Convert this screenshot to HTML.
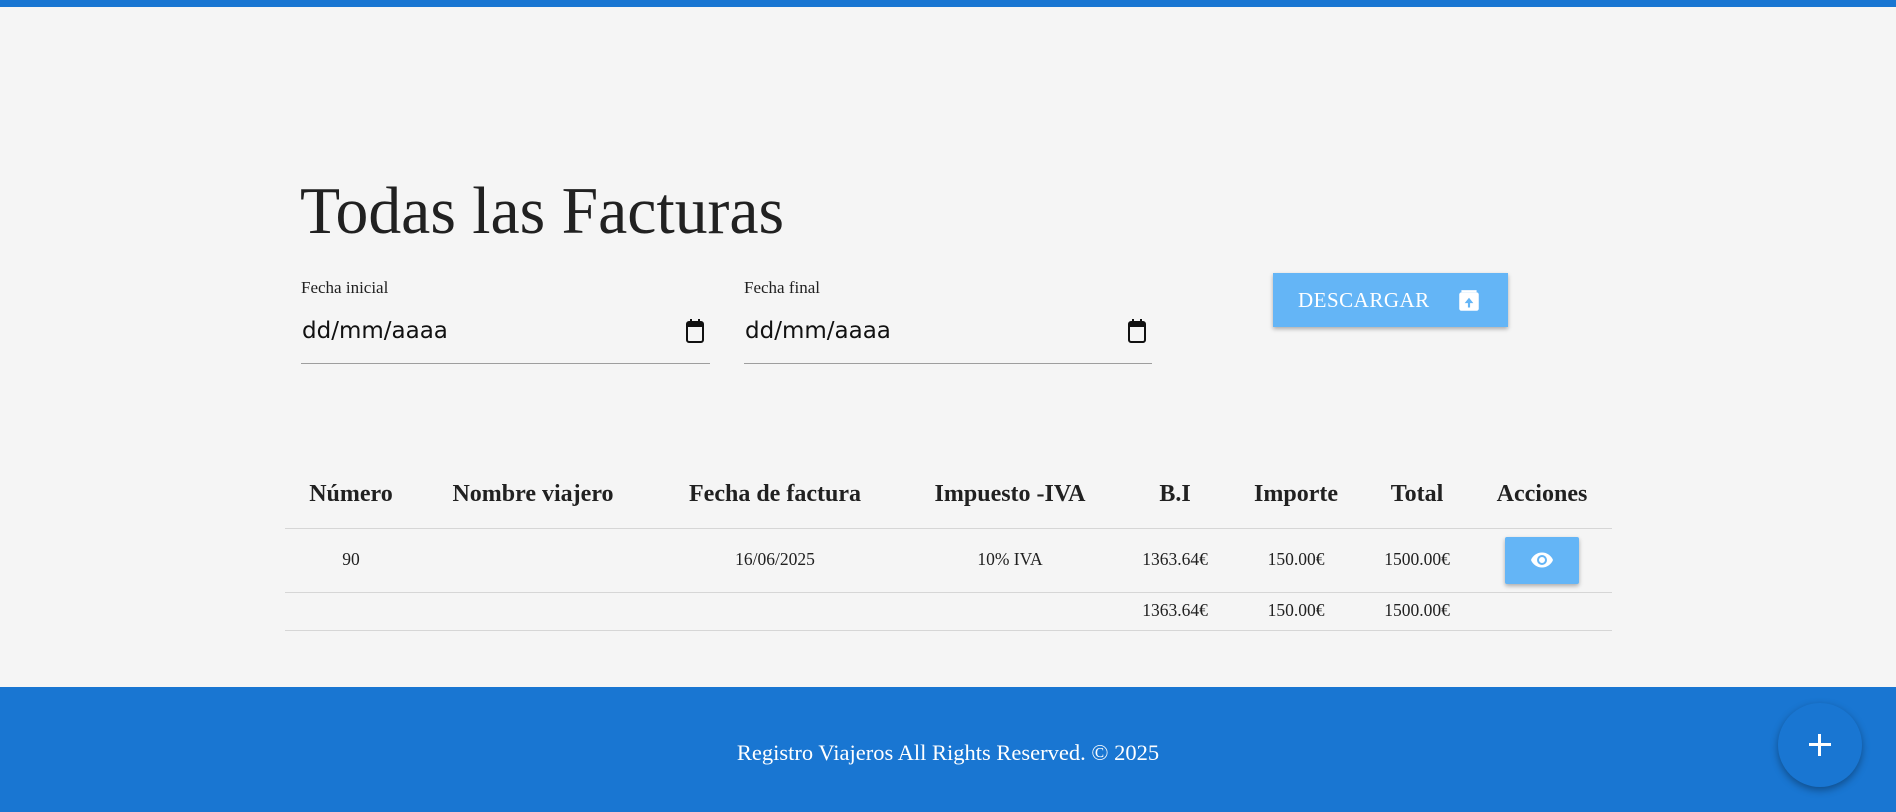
<!DOCTYPE html>
<html><head><meta charset="utf-8"><style>
*{margin:0;padding:0;box-sizing:border-box}
body{width:1896px;height:812px;background:#f5f5f5;font-family:"Liberation Serif",serif;position:relative;overflow:hidden;color:#212121}
.top{position:absolute;top:0;left:0;width:100%;height:7px;background:#1976d2}
h1{position:absolute;left:300px;top:178px;font-size:67px;font-weight:400;line-height:1;transform:scaleX(0.98);transform-origin:left}
.lbl{position:absolute;top:278px;font-size:17px}
.inp{position:absolute;top:316px;height:48px;border-bottom:1px solid #9e9e9e;font-family:"DejaVu Sans",sans-serif;font-size:23px;color:#111}
.inp span{position:absolute;left:1px;top:2px}
.inp svg{position:absolute;right:3px;top:1px}
.btn{position:absolute;left:1273px;top:273px;width:235px;height:54px;background:#64b5f6;box-shadow:0 2px 4px rgba(0,0,0,.3);color:#fff;font-size:21px;letter-spacing:.5px}
.btn span{position:absolute;left:25px;top:15px}
.btn svg{position:absolute;left:183px;top:15px}
.c{position:absolute;transform:translateX(-50%);white-space:nowrap}
.h{font-weight:700;font-size:24px;top:481px}
.r{font-size:17.5px;top:549px}
.t{font-size:17.5px;top:600px}
.line{position:absolute;left:285px;width:1327px;height:1px;background:#d6d6d6}
.eye{position:absolute;left:1505px;top:537px;width:74px;height:47px;background:#64b5f6;border-radius:2px;box-shadow:0 2px 4px rgba(0,0,0,.3)}
.eye svg{position:absolute;left:25px;top:11px}
.foot{position:absolute;left:0;top:687px;width:100%;height:125px;background:#1976d2;color:#fff;font-size:22.5px;text-align:center;padding-top:53px}
.fab{position:absolute;left:1778px;top:703px;width:84px;height:84px;border-radius:50%;background:#1976d2;box-shadow:0 3px 8px rgba(0,0,0,.35)}
.fab:before,.fab:after{content:"";position:absolute;background:#fff;left:31px;top:40px;width:22px;height:3px}
.fab:after{left:40px;top:31px;width:3px;height:22px}
</style></head><body>
<div class="top"></div>
<h1>Todas las Facturas</h1>
<div class="lbl" style="left:301px">Fecha inicial</div>
<div class="lbl" style="left:744px">Fecha final</div>
<div class="inp" style="left:301px;width:409px"><span>dd/mm/aaaa</span><svg width="24" height="28" viewBox="0 0 24 28"><rect x="4" y="5" width="16" height="20" rx="2" fill="none" stroke="#111" stroke-width="2"/><rect x="4" y="5" width="16" height="5" fill="#111"/><rect x="7" y="2" width="2" height="4" fill="#111"/><rect x="15" y="2" width="2" height="4" fill="#111"/></svg></div>
<div class="inp" style="left:744px;width:408px"><span>dd/mm/aaaa</span><svg width="24" height="28" viewBox="0 0 24 28"><rect x="4" y="5" width="16" height="20" rx="2" fill="none" stroke="#111" stroke-width="2"/><rect x="4" y="5" width="16" height="5" fill="#111"/><rect x="7" y="2" width="2" height="4" fill="#111"/><rect x="15" y="2" width="2" height="4" fill="#111"/></svg></div>
<div class="btn"><span>DESCARGAR</span><svg width="26" height="26" viewBox="0 0 24 24"><rect x="3" y="4" width="18" height="17" rx="2" fill="#fff"/><rect x="5" y="2" width="14" height="2" fill="#fff"/><path d="M12 9l-4 5h3v4h2v-4h3z" fill="#64b5f6"/></svg></div>
<div class="c h" style="left:351px">Número</div>
<div class="c h" style="left:533px">Nombre viajero</div>
<div class="c h" style="left:775px">Fecha de factura</div>
<div class="c h" style="left:1010px">Impuesto -IVA</div>
<div class="c h" style="left:1175px">B.I</div>
<div class="c h" style="left:1296px">Importe</div>
<div class="c h" style="left:1417px">Total</div>
<div class="c h" style="left:1542px">Acciones</div>
<div class="line" style="top:528px"></div>
<div class="c r" style="left:351px">90</div>
<div class="c r" style="left:775px">16/06/2025</div>
<div class="c r" style="left:1010px">10% IVA</div>
<div class="c r" style="left:1175px">1363.64€</div>
<div class="c r" style="left:1296px">150.00€</div>
<div class="c r" style="left:1417px">1500.00€</div>
<div class="eye"><svg width="24" height="24" viewBox="0 0 24 24"><path d="M12 4.5C7 4.5 2.7 7.6 1 12c1.7 4.4 6 7.5 11 7.5s9.3-3.1 11-7.5c-1.7-4.4-6-7.5-11-7.5zM12 17a5 5 0 110-10 5 5 0 010 10zm0-8a3 3 0 100 6 3 3 0 000-6z" fill="#fff"/></svg></div>
<div class="line" style="top:592px"></div>
<div class="c t" style="left:1175px">1363.64€</div>
<div class="c t" style="left:1296px">150.00€</div>
<div class="c t" style="left:1417px">1500.00€</div>
<div class="line" style="top:630px"></div>
<div class="foot">Registro Viajeros All Rights Reserved. © 2025</div>
<div class="fab"></div>
</body></html>
